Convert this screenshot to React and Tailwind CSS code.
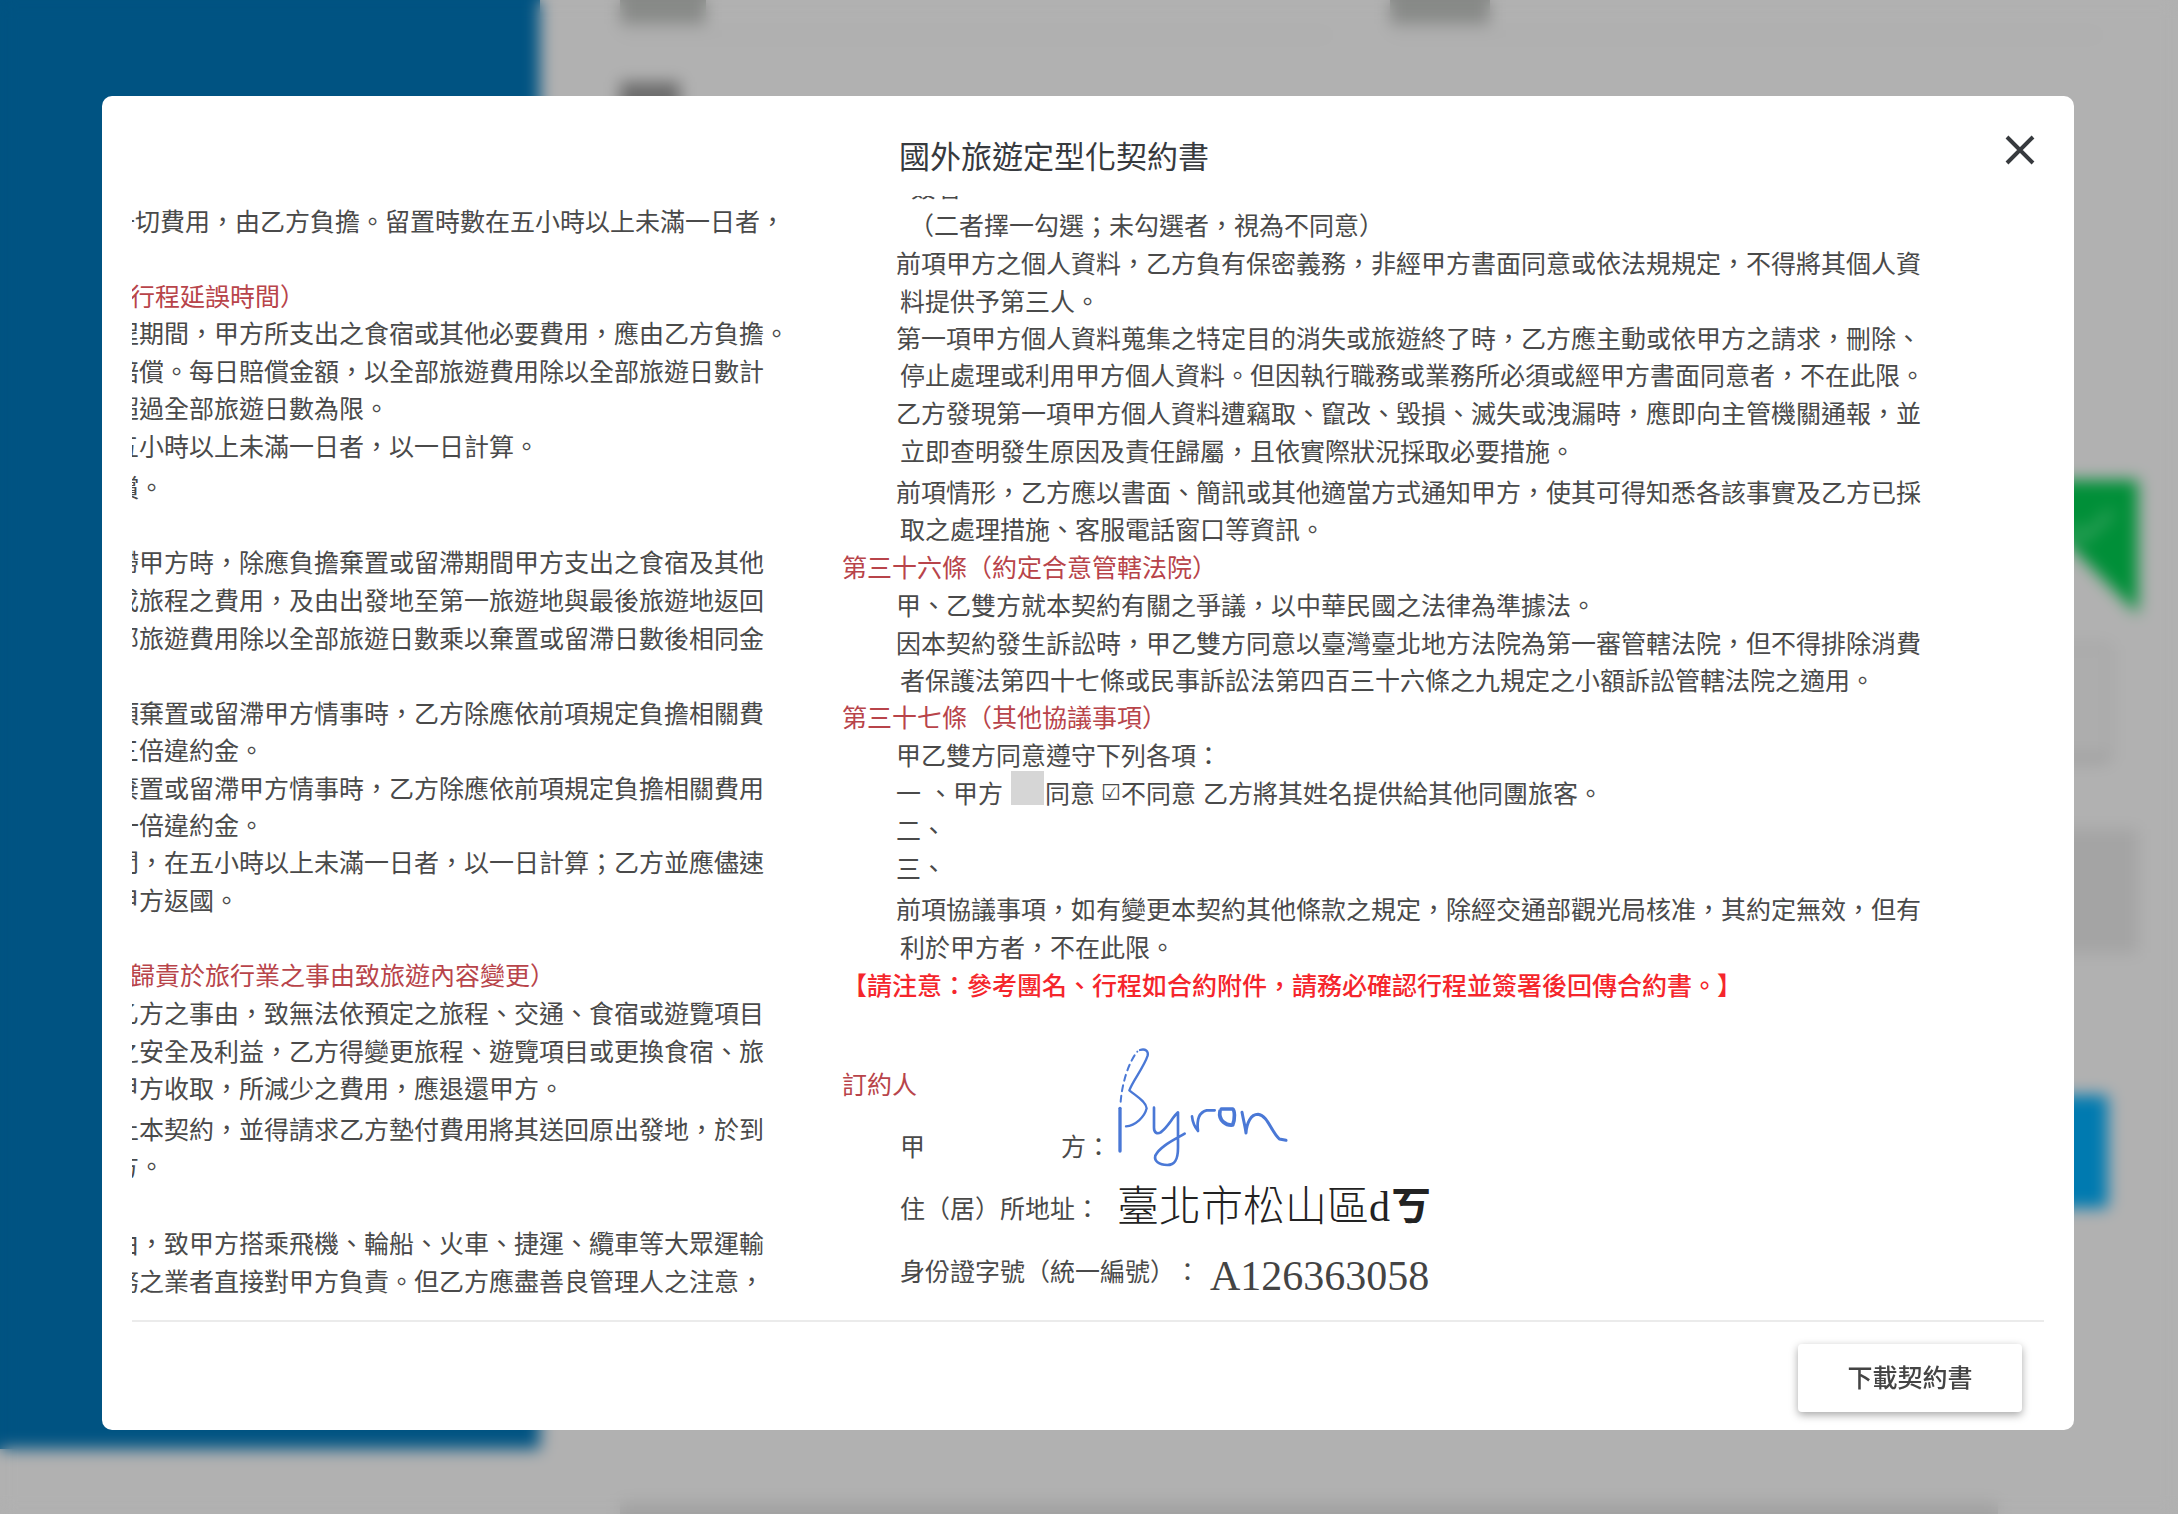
const LEFT = [
  ["mt-3", "-ml-[22px]", "一切費用，由乙方負擔。留置時數在五小時以上未滿一日者，"],
  ["mt-[50px]", "-ml-[2px]", "行程延誤時間）", "h"],
  ["mt-3", "-ml-[18px]", "程期間，甲方所支出之食宿或其他必要費用，應由乙方負擔。"],
  ["mt-[13px]", "-ml-[18px]", "賠償。每日賠償金額，以全部旅遊費用除以全部旅遊日數計"],
  ["mt-3", "-ml-[18px]", "超過全部旅遊日數為限。"],
  ["mt-[13px]", "-ml-[18px]", "五小時以上未滿一日者，以一日計算。"],
  ["mt-4", "-ml-[18px]", "償。"],
  ["mt-[50px]", "-ml-[18px]", "滯甲方時，除應負擔棄置或留滯期間甲方支出之食宿及其他"],
  ["mt-[13px]", "-ml-[18px]", "或旅程之費用，及由出發地至第一旅遊地與最後旅遊地返回"],
  ["mt-[13px]", "-ml-[18px]", "部旅遊費用除以全部旅遊日數乘以棄置或留滯日數後相同金"],
  ["mt-[50px]", "-ml-[18px]", "項棄置或留滯甲方情事時，乙方除應依前項規定負擔相關費"],
  ["mt-3", "-ml-[18px]", "三倍違約金。"],
  ["mt-[13px]", "-ml-[18px]", "棄置或留滯甲方情事時，乙方除應依前項規定負擔相關費用"],
  ["mt-3", "-ml-[18px]", "一倍違約金。"],
  ["mt-3", "-ml-[18px]", "間，在五小時以上未滿一日者，以一日計算；乙方並應儘速"],
  ["mt-[13px]", "-ml-[18px]", "甲方返國。"],
  ["mt-[50px]", "-ml-[2px]", "歸責於旅行業之事由致旅遊內容變更）", "h"],
  ["mt-[13px]", "-ml-[18px]", "乙方之事由，致無法依預定之旅程、交通、食宿或遊覽項目"],
  ["mt-[13px]", "-ml-[18px]", "之安全及利益，乙方得變更旅程、遊覽項目或更換食宿、旅"],
  ["mt-3", "-ml-[18px]", "甲方收取，所減少之費用，應退還甲方。"],
  ["mt-4", "-ml-[18px]", "止本契約，並得請求乙方墊付費用將其送回原出發地，於到"],
  ["mt-3", "-ml-[18px]", "方。"],
  ["mt-13", "-ml-[18px]", "由，致甲方搭乘飛機、輪船、火車、捷運、纜車等大眾運輸"],
  ["mt-[13px]", "-ml-[18px]", "務之業者直接對甲方負責。但乙方應盡善良管理人之注意，"],
];

const FIRST = "ml-[54px]";
const REST = "ml-[58px]";

const RIGHT_TOP = [
  ["mt-0", "ml-[67px]", "（二者擇一勾選；未勾選者，視為不同意）"],
  ["mt-[13px]", FIRST, "前項甲方之個人資料，乙方負有保密義務，非經甲方書面同意或依法規規定，不得將其個人資"],
  ["mt-[13px]", REST, "料提供予第三人。"],
  ["mt-3", FIRST, "第一項甲方個人資料蒐集之特定目的消失或旅遊終了時，乙方應主動或依甲方之請求，刪除、"],
  ["mt-3", REST, "停止處理或利用甲方個人資料。但因執行職務或業務所必須或經甲方書面同意者，不在此限。"],
  ["mt-[13px]", FIRST, "乙方發現第一項甲方個人資料遭竊取、竄改、毀損、滅失或洩漏時，應即向主管機關通報，並"],
  ["mt-[13px]", REST, "立即查明發生原因及責任歸屬，且依實際狀況採取必要措施。"],
  ["mt-4", FIRST, "前項情形，乙方應以書面、簡訊或其他適當方式通知甲方，使其可得知悉各該事實及乙方已採"],
  ["mt-3", REST, "取之處理措施、客服電話窗口等資訊。"],
  ["mt-[13px]", "ml-0", "第三十六條（約定合意管轄法院）", "h"],
  ["mt-[13px]", FIRST, "甲、乙雙方就本契約有關之爭議，以中華民國之法律為準據法。"],
  ["mt-[13px]", FIRST, "因本契約發生訴訟時，甲乙雙方同意以臺灣臺北地方法院為第一審管轄法院，但不得排除消費"],
  ["mt-3", REST, "者保護法第四十七條或民事訴訟法第四百三十六條之九規定之小額訴訟管轄法院之適用。"],
  ["mt-3", "ml-0", "第三十七條（其他協議事項）", "h"],
  ["mt-[13px]", FIRST, "甲乙雙方同意遵守下列各項："],
];

const RIGHT_BOTTOM = [
  ["mt-3", FIRST, "二、"],
  ["mt-[13px]", FIRST, "三、"],
  ["mt-4", FIRST, "前項協議事項，如有變更本契約其他條款之規定，除經交通部觀光局核准，其約定無效，但有"],
  ["mt-[13px]", REST, "利於甲方者，不在此限。"],
];

function Line({ row }) {
  const [gap, indent, text, kind] = row;
  return kind === "h" ? (
    <h3 className={`${gap} ${indent} text-[#b8444a]`}>{text}</h3>
  ) : (
    <p className={`${gap} ${indent}`}>{text}</p>
  );
}

function Signature() {
  return (
    <svg
      role="img"
      aria-label="Byron"
      viewBox="0 0 720 450"
      preserveAspectRatio="none"
      className="absolute -top-[127px] left-[238px] h-[150px] w-[240px]"
      fill="none"
      stroke="#4a78d6"
      strokeWidth="8"
      strokeLinecap="round"
      strokeLinejoin="round"
    >
      <path d="M120 360V232" strokeWidth="10" />
      <path d="M122 212C126 160 144 96 172 62" strokeDasharray="18 14" strokeWidth="6" />
      <path d="M180 57C196 52 206 60 203 74C190 112 160 146 148 178C166 194 198 210 200 232C194 258 166 284 138 286" strokeWidth="7" />
      <path d="M222 230V290C222 306 232 310 242 304C266 286 276 260 294 244V350C294 388 284 402 262 402C236 402 222 390 226 374C240 346 280 328 314 308" />
      <path d="M336 256C338 276 346 290 354 300C350 270 356 244 380 238H404" />
      <path d="M420 240C414 270 440 284 458 282C466 262 464 238 458 234H424" strokeWidth="11" />
      <path d="M486 244C490 266 496 288 498 306C500 276 512 250 534 250C564 254 572 300 598 324L618 328" strokeWidth="9" />
    </svg>
  );
}

function Backdrop() {
  return (
    <div aria-hidden="true" className="absolute inset-0 overflow-hidden bg-[#b1b1b1]">
      <div className="flex h-full">
        <div className="h-[1449px] w-[540px] shrink-0 bg-[#005382]" />
        <div className="flex min-w-0 flex-1 flex-col pl-20 *:shrink-0">
          <div className="mr-[78px] flex gap-[60px]">
            <div className="h-9 flex-1 border-b-2 border-[#a2a2a2]">
              <div className="h-[24px] w-[86px] bg-[#888a88]" />
            </div>
            <div className="h-9 flex-1 border-b-2 border-[#a2a2a2]">
              <div className="h-[24px] w-[100px] bg-[#888a88]" />
            </div>
          </div>
          <div className="mt-[46px] h-8 w-[60px] bg-[#6c6c6c]" />
          <svg className="mt-[366px] mr-10 h-[134px] w-[134px] self-end" viewBox="0 0 134 134">
            <path d="M0 0H134V134Z" fill="#008f38" />
            <path d="M66 46L80 58L108 32" stroke="#3ba562" strokeWidth="7" fill="none" />
          </svg>
          <div className="mt-[30px] mr-[66px] h-[118px] rounded-lg border-2 border-b-6 border-[#979797] bg-[#adadad]" />
          <div className="mt-[67px] mr-10 h-[124px] bg-[#a4a4a4]" />
          <div className="mt-[142px] mr-[70px] h-[113px] w-[400px] self-end rounded bg-[#007ab0]" />
          <div className="mt-[294px] mr-[180px] h-16 bg-[#a2a2a2]" />
        </div>
      </div>
      <div className="absolute inset-0 backdrop-blur-[8px]" />
    </div>
  );
}

export default function App() {
  return (
    <div
      lang="zh-TW"
      className="relative min-h-screen font-['Noto_Sans_CJK_TC',sans-serif] [text-spacing-trim:space-all]"
    >
      <Backdrop />
      <div className="relative flex min-h-screen flex-col pt-24 pr-[104px] pb-21 pl-[102px]">
        <section
          role="dialog"
          aria-labelledby="contract-title"
          className="flex flex-1 flex-col rounded-[10px] bg-white px-[30px]"
        >
          <header className="flex h-[100px] items-start">
            <h2
              id="contract-title"
              className="flex-1 pt-9 pr-[28px] text-center text-[31px] leading-[46px] text-[#373a3e]"
            >
              國外旅遊定型化契約書
            </h2>
            <button type="button" aria-label="關閉" className="mt-9 mr-2 flex w-[32px] shrink-0 justify-center">
              <svg viewBox="0 0 32 36" className="h-9 w-8" fill="none" stroke="#373a3e" strokeWidth="4">
                <path d="M3 5L29 31M29 5L3 31" />
              </svg>
            </button>
          </header>

          <div className="flex h-[1124px] overflow-hidden text-[25px] leading-[25px] whitespace-nowrap text-[#4a4a4a]">
            <div className="w-[660px] shrink-0 overflow-hidden">
              {LEFT.map((row, i) => (
                <Line key={i} row={row} />
              ))}
            </div>
            <div className="ml-[50px] min-w-0 flex-1">
              <p className="-mt-[22px] mb-[13px] ml-[69px]">簽署</p>
              {RIGHT_TOP.map((row, i) => (
                <Line key={i} row={row} />
              ))}
              <p className="mt-[13px] ml-[54px] flex">
                <span className="mr-[7px]">一</span>
                <span>、甲方</span>
                <span className="-my-[9px] mr-px ml-[8px] h-[34px] w-[33px] bg-[#d6d6d6]" />
                <span>同意</span>
                <span className="mr-px ml-[6px] w-[19px] font-['DejaVu_Sans',sans-serif] text-[22px]">☑</span>
                <span className="mr-[7px]">不同意</span>
                <span>乙方將其姓名提供給其他同團旅客。</span>
              </p>
              {RIGHT_BOTTOM.map((row, i) => (
                <Line key={i} row={row} />
              ))}
              <p className="mt-[13px] font-medium text-[#f5262c]">
                【請注意：參考團名、行程如合約附件，請務必確認行程並簽署後回傳合約書。】
              </p>
              <h3 className="mt-[74px] text-[#b8444a]">訂約人</h3>
              <p className="mt-[37px] ml-[58px] flex">
                <span className="w-[161px]">甲</span>
                <span>方：</span>
              </p>
              <div className="relative h-0">
                <Signature />
              </div>
              <p className="mt-[37px] ml-[58px] flex items-center">
                <span className="w-[217px]">住（居）所地址：</span>
                <span className="font-['Liberation_Serif','Noto_Sans_CJK_TC',serif] text-[42px] font-light text-[#222222]">
                  臺北市松山區d<b className="font-bold">ㄎ</b>
                </span>
              </p>
              <p className="mt-[38px] ml-[58px] flex items-start">
                <span className="w-[310px]">身份證字號（統一編號）：</span>
                <span className="pt-1.5 font-['Liberation_Serif',serif] text-[42px] text-[#444444]">A126363058</span>
              </p>
            </div>
          </div>

          <footer className="mt-auto flex h-[110px] justify-end border-t-2 border-[#ebebeb] pt-[22px] pr-[22px]">
            <button
              type="button"
              className="h-[68px] w-56 rounded bg-white pb-0.5 text-[25px] font-medium text-[#444444] shadow-[0_3px_8px_rgba(0,0,0,0.35)]"
            >
              下載契約書
            </button>
          </footer>
        </section>
      </div>
    </div>
  );
}
